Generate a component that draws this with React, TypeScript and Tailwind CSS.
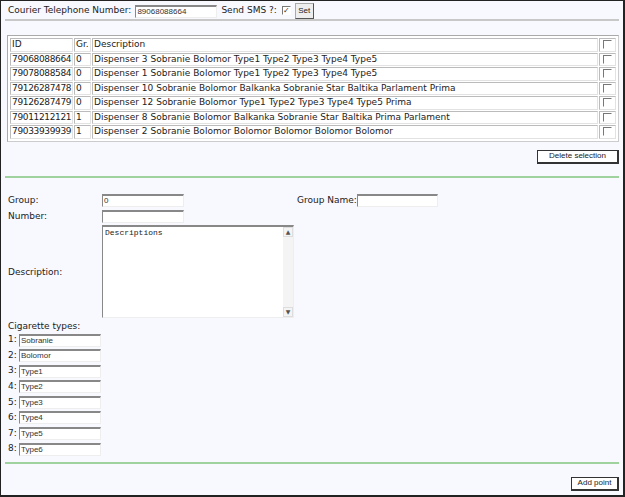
import React from 'react';

const rows = [
  { id: '79068088664', gr: '0', desc: 'Dispenser 3 Sobranie Bolomor Type1 Type2 Type3 Type4 Type5' },
  { id: '79078088584', gr: '0', desc: 'Dispenser 1 Sobranie Bolomor Type1 Type2 Type3 Type4 Type5' },
  { id: '79126287478', gr: '0', desc: 'Dispenser 10 Sobranie Bolomor Balkanka Sobranie Star Baltika Parlament Prima' },
  { id: '79126287479', gr: '0', desc: 'Dispenser 12 Sobranie Bolomor Type1 Type2 Type3 Type4 Type5 Prima' },
  { id: '79011212121', gr: '1', desc: 'Dispenser 8 Sobranie Bolomor Balkanka Sobranie Star Baltika Prima Parlament' },
  { id: '79033939939', gr: '1', desc: 'Dispenser 2 Sobranie Bolomor Bolomor Bolomor Bolomor Bolomor' },
];

const types = ['Sobranie', 'Bolomor', 'Type1', 'Type2', 'Type3', 'Type4', 'Type5', 'Type6'];

const Box = ({ checked = false }: { checked?: boolean }) => (
  <span className="inline-flex items-center justify-center w-[9px] h-[9px] bg-white border-t border-l border-[#777] border-b border-r border-b-[#fff] border-r-[#fff] text-[8px] leading-none text-[#333] align-middle">
    {checked ? '✓' : ''}
  </span>
);

const Field = ({ value = '', w = 'w-[82px]' }: { value?: string; w?: string }) => (
  <div className={`${w} h-[13px] bg-white border-t-2 border-l border-[#888] border-b border-r border-b-[#eee] border-r-[#eee] px-[1px] text-[8px] leading-[10px] text-[#333] font-['Liberation_Sans',sans-serif] overflow-hidden`}>
    {value}
  </div>
);

const Button = ({ label, w }: { label: string; w: string }) => (
  <div className={`${w} h-[14px] bg-white border border-[#333] border-r-2 border-b-2 flex items-center justify-center text-[8px] text-[#222] font-['Liberation_Sans',sans-serif]`}>
    {label}
  </div>
);

const cell = 'border border-[#bbb] border-r-[#e2e2e2] border-b-[#e2e2e2] px-[1px] leading-[11px] overflow-hidden';

export default function App() {
  return (
    <div className="w-[625px] h-[497px] bg-[#f8f8ff] border-l border-t border-r-2 border-b-2 border-[#222] overflow-hidden font-['DejaVu_Sans',sans-serif] text-[9px] text-[#222]">
      {/* Top bar */}
      <div className="h-[18px] flex items-center pl-[7px] pt-[1px]">
        <span>Courier Telephone Number:</span>
        <div className="ml-[4px] mt-[1px]">
          <Field value="89068088664" w="w-[82px]" />
        </div>
        <span className="ml-[4px]">Send SMS ?:</span>
        <span className="ml-[5px] flex"><Box checked /></span>
        <div className="ml-[4px] h-[16px] w-[19px] bg-[#eee] border border-[#aaa] border-r-[#555] border-b-[#555] flex items-center justify-center text-[8px] font-['Liberation_Sans',sans-serif]">Set</div>
      </div>
      <div className="ml-[4px] w-[614px] h-[2px] bg-[#c8c8c8]" />

      {/* Table */}
      <div className="ml-[6px] mt-[14px] w-[612px] border border-[#aaa] border-r-[#ccc] border-b-[#ccc] bg-white p-[1px]">
        <table className="w-full table-fixed border-separate border-spacing-[1px] text-[9px]">
          <colgroup>
            <col className="w-[63px]" />
            <col className="w-[17px]" />
            <col />
            <col className="w-[17px]" />
          </colgroup>
          <tbody>
            <tr className="h-[13.5px]">
              <td className={cell}>ID</td>
              <td className={`${cell} whitespace-nowrap`}>Gr.</td>
              <td className={cell}>Description</td>
              <td className={`${cell} text-center`}><Box /></td>
            </tr>
            {rows.map(r => (
              <tr key={r.id} className="h-[13.5px]">
                <td className={`${cell} tracking-[-0.35px]`}>{r.id}</td>
                <td className={cell}>{r.gr}</td>
                <td className={`${cell} whitespace-nowrap`}>{r.desc}</td>
                <td className={`${cell} text-center`}><Box /></td>
              </tr>
            ))}
          </tbody>
        </table>
      </div>

      <div className="flex justify-end pr-[4px] mt-[8px]">
        <Button label="Delete selection" w="w-[82px]" />
      </div>
      <div className="ml-[4px] mt-[12px] w-[614px] h-[2px] bg-[#9fd29f]" />

      {/* Form */}
      <div className="pl-[7px] mt-[16px]">
        <div className="flex items-center h-[14px]">
          <span className="w-[94px]">Group:</span>
          <Field value="0" />
          <span className="ml-[113px]">Group Name:</span>
          <Field w="w-[81px]" />
        </div>
        <div className="flex items-center h-[14px] mt-[2px]">
          <span className="w-[94px]">Number:</span>
          <Field />
        </div>
        <div className="flex items-center mt-[1px]">
          <span className="w-[94px] pt-[3px]">Description:</span>
          <div className="w-[192px] h-[93px] bg-white border-t-2 border-l border-[#888] border-b border-r border-b-[#eee] border-r-[#eee] flex">
            <div className="flex-1 px-[2px] pt-[1px] text-[8px] leading-[10px] font-['Liberation_Mono',monospace]">Descriptions</div>
            <div className="w-[10px] flex flex-col justify-between bg-[#f4f4f4]">
              <div className="h-[10px] flex items-center justify-center text-[6px] text-[#555] border border-[#ddd]">▲</div>
              <div className="h-[10px] flex items-center justify-center text-[6px] text-[#555] border border-[#ddd]">▼</div>
            </div>
          </div>
        </div>
        <div className="mt-[1px] h-[14px] leading-[14px]">Cigarette types:</div>
        <div className="flex flex-col gap-[2.6px] mt-[1px]">
          {types.map((t, i) => (
            <div key={t} className="flex items-center h-[13px]">
              <span className="w-[11px]">{i + 1}:</span>
              <Field value={t} />
            </div>
          ))}
        </div>
      </div>
      <div className="ml-[4px] mt-[6px] w-[614px] h-[2px] bg-[#9fd29f]" />
      <div className="flex justify-end pr-[4px] mt-[13px]">
        <Button label="Add point" w="w-[48px]" />
      </div>
    </div>
  );
}
